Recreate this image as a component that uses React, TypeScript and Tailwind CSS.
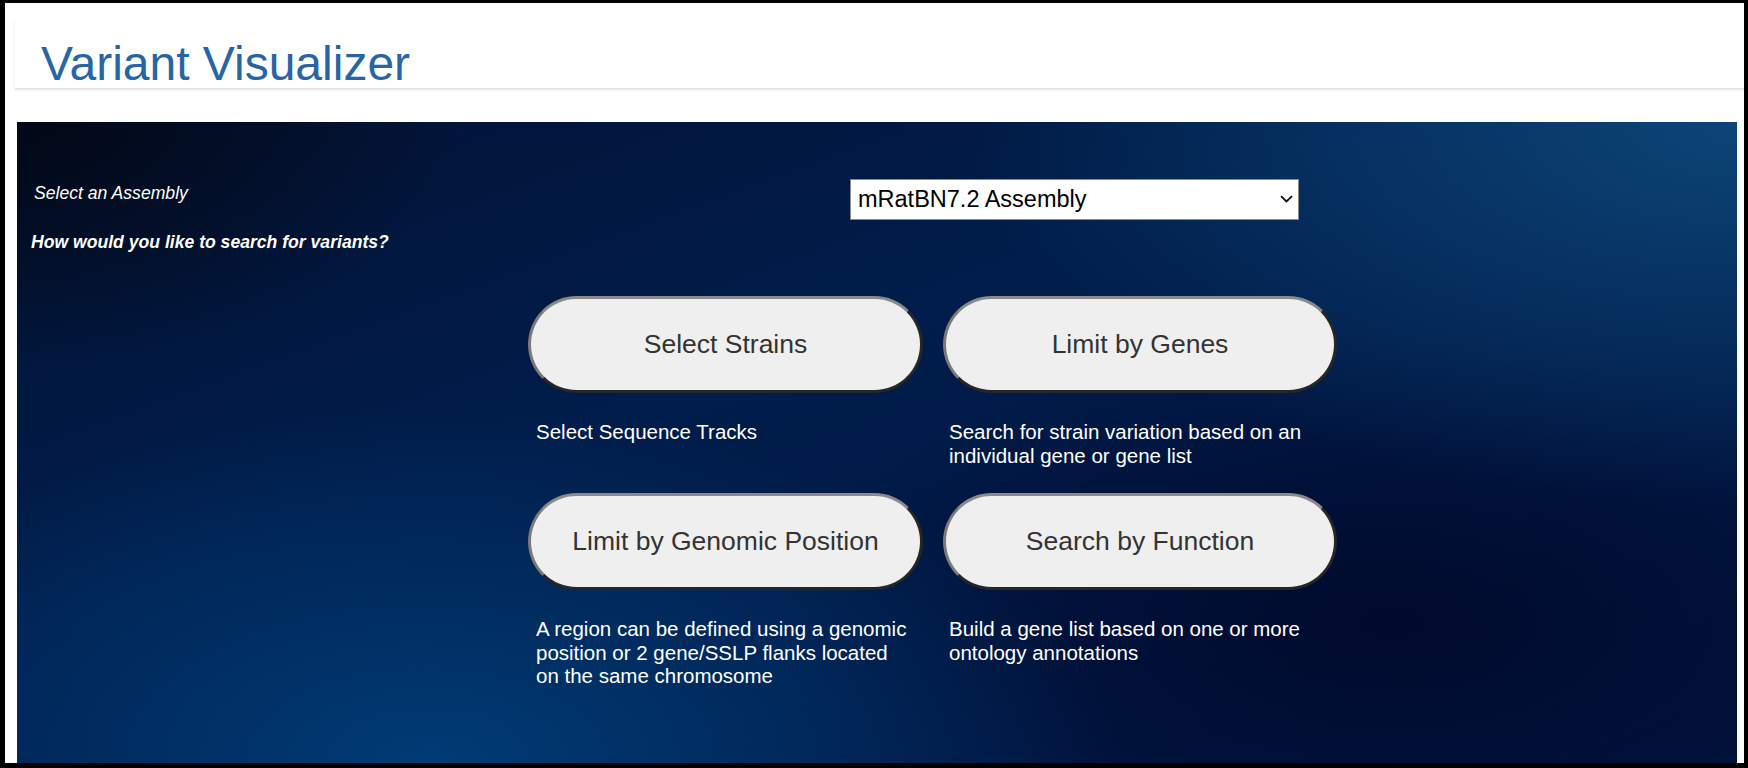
import { useState } from 'react';

const options = [
  {
    label: 'Select Strains',
    desc: 'Select Sequence Tracks',
    pad: 'pl-2',
  },
  {
    label: 'Limit by Genes',
    desc: 'Search for strain variation based on an individual gene or gene list',
    pad: 'pl-[6px]',
  },
  {
    label: 'Limit by Genomic Position',
    desc: 'A region can be defined using a genomic position or 2 gene/SSLP flanks located on the same chromosome',
    pad: 'pl-2',
  },
  {
    label: 'Search by Function',
    desc: 'Build a gene list based on one or more ontology annotations',
    pad: 'pl-[6px]',
  },
];

export default function App() {
  const [assembly, setAssembly] = useState('mRatBN7.2');

  return (
    <div className="w-[1748px] h-[768px] bg-black pt-[3px] pl-[5px] pr-[4px] pb-[5px] font-['Liberation_Sans',Arial,sans-serif]">
      <div className="w-full h-full bg-white flex flex-col">
        {/* Header */}
        <div className="mt-[17px] ml-[10px] h-[69px] pl-[26px] pt-[19px] border-b border-[#e2e2e2] shadow-[0_2px_2px_rgba(0,0,0,0.06),-1px_0_2px_rgba(0,0,0,0.04)]">
          <h1 className="text-[48px] leading-[50px] text-[#2865a6]">Variant Visualizer</h1>
        </div>

        {/* Main panel */}
        <div className="flex-1 mt-[33px] ml-[12px] mr-[7px] pt-[57px] pl-[12px] text-white bg-[radial-gradient(26%_38%_at_0%_0%,#020816_0%,transparent_100%),radial-gradient(45%_60%_at_100%_0%,#0c4577_0%,transparent_100%),radial-gradient(40%_55%_at_24%_100%,#003c76_0%,transparent_100%),radial-gradient(35%_45%_at_80%_78%,#000a2c_0%,transparent_100%),linear-gradient(160deg,#031233_0%,#001d4b_40%,#001440_100%)]">
          <div className="flex h-[41px]">
            <div className="w-[821px] pl-[5px] mt-[4px] text-[17.6px] leading-[20px] italic">
              Select an Assembly
            </div>
            <div className="relative w-[449px] h-[41px]">
              <select
                value={assembly}
                onChange={(e) => setAssembly(e.target.value)}
                className="appearance-none w-full h-full bg-white border border-[#8a8a8a] pl-[7px] text-[23.5px] text-black outline-none font-['Liberation_Sans',Arial,sans-serif]"
              >
                <option value="mRatBN7.2">mRatBN7.2 Assembly</option>
                <option value="rn6">Rnor_6.0 Assembly</option>
                <option value="rn5">Rnor_5.0 Assembly</option>
              </select>
              <svg
                className="absolute right-[6px] top-[16px] pointer-events-none"
                width="13"
                height="8"
                viewBox="0 0 13 8"
                fill="none"
              >
                <path d="M1 1.2L6.5 6.5L12 1.2" stroke="#111" strokeWidth="1.8" />
              </svg>
            </div>
          </div>

          <div className="mt-[12px] pl-[2px] text-[17.6px] leading-[20px] italic font-bold">
            How would you like to search for variants?
          </div>

          {/* Options */}
          <div className="mt-[44px] ml-[499px] grid grid-cols-[395px_394px] gap-x-[20px] gap-y-[26px]">
            {options.map((o) => (
              <div key={o.label} className="flex flex-col">
                <button className="h-[97px] rounded-full bg-[#efefef] border-[3px] border-t-[#8a8a8a] border-l-[#7a7a7a] border-r-[#262626] border-b-[#262626] text-[26.5px] text-[#333]">
                  {o.label}
                </button>
                <p className={`mt-[27px] ${o.pad} pr-2 text-[20.5px] leading-[23.5px]`}>{o.desc}</p>
              </div>
            ))}
          </div>
        </div>
      </div>
    </div>
  );
}
